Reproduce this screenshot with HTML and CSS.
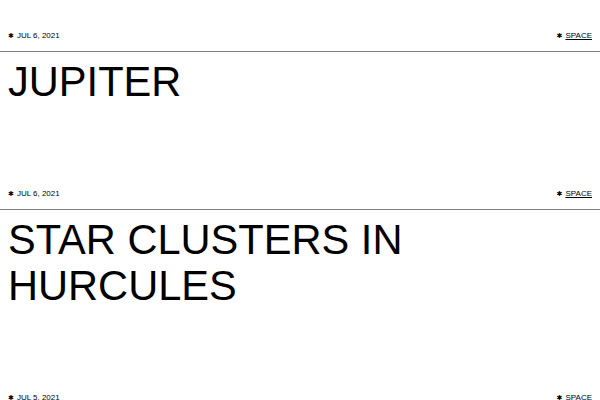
FILE: index.html
```html
<!DOCTYPE html>
<html lang="en">
<head>
<meta charset="utf-8">
<title>Posts</title>
<link rel="stylesheet" href="styles.css">
</head>
<body>
<main class="posts">
  <article class="post">
    <div class="meta">
      <span class="date"><span class="star">✱</span>JUL 6, 2021</span>
      <span class="cat"><span class="star">✱</span><a href="#">SPACE</a></span>
    </div>
    <h2 class="title">JUPITER</h2>
  </article>
  <article class="post">
    <div class="meta">
      <span class="date"><span class="star">✱</span>JUL 6, 2021</span>
      <span class="cat"><span class="star">✱</span><a href="#">SPACE</a></span>
    </div>
    <h2 class="title">STAR CLUSTERS IN<br>HURCULES</h2>
  </article>
  <article class="post">
    <div class="meta">
      <span class="date"><span class="star">✱</span>JUL 5, 2021</span>
      <span class="cat"><span class="star">✱</span><a href="#">SPACE</a></span>
    </div>
    <h2 class="title">SATURN</h2>
  </article>
</main>
</body>
</html>
```
FILE: styles.css
```css
html, body {
  margin: 0;
  padding: 0;
  background: #fff;
  color: #000;
  font-family: "Liberation Sans", Arial, sans-serif;
}
.posts {
  display: flex;
  flex-direction: column;
}
.post {
  display: flex;
  flex-direction: column;
}
.meta {
  display: flex;
  justify-content: space-between;
  align-items: center;
  padding: 30px 8px 9px;
  font-size: 8px;
  line-height: 12px;
  border-bottom: 1px solid #808080;
}
.date, .cat {
  display: flex;
  align-items: center;
}
.star {
  font-family: "DejaVu Sans", sans-serif;
  font-size: 7px;
  line-height: 12px;
  margin-right: 3px;
}
.cat a {
  color: #000;
  text-decoration: underline;
}
.title {
  margin: 7px 0 53px;
  padding: 0 8px;
  font-size: 41.6px;
  line-height: 46px;
  font-weight: normal;
}
```
